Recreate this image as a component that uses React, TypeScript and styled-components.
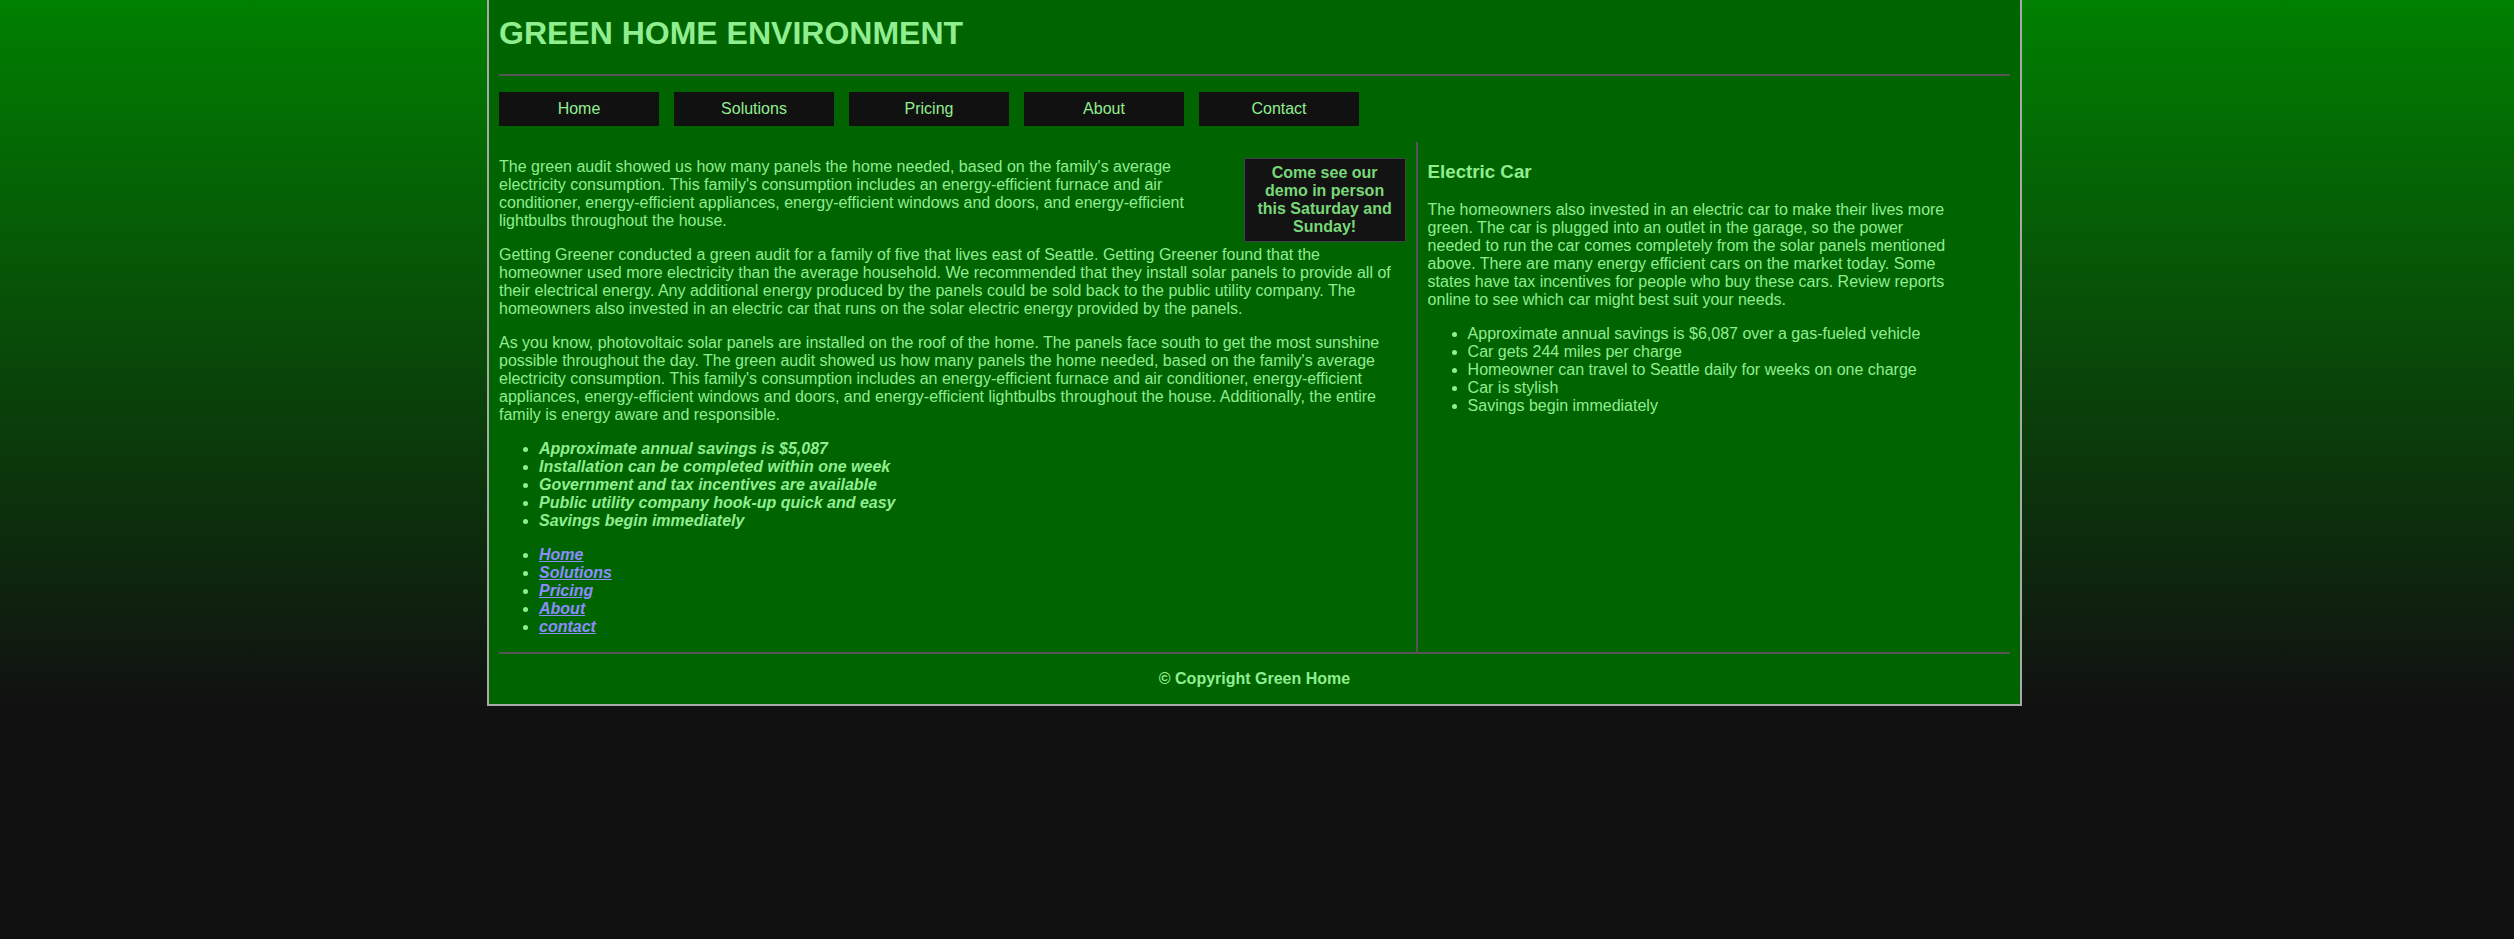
import React from "react";
import styled, { createGlobalStyle } from "styled-components";

const GlobalStyle = createGlobalStyle`
  html { background: #111; }
  body {
    margin: 0;
    font-family: "Liberation Sans", Arial, sans-serif;
    font-size: 16px;
    color: #90ee90;
    background: linear-gradient(to bottom, #008000, #111111) no-repeat;
  }
`;

const Page = styled.div`
  width: 1511px;
  margin-left: calc(50% - 770px);
  padding: 0 10px;
  background: #006400;
  border: 2px solid #a9a9a9;
  border-top: none;
  display: flow-root;
`;

const Title = styled.h1`
  margin: 15px 0 22px;
  font-size: 32px;
  font-weight: bold;
  color: #90ee90;
`;

const Rule = styled.hr`
  margin: 0;
  border: none;
  height: 2px;
  background: #555;
`;

const Nav = styled.nav`
  display: flex;
  gap: 15px;
  margin: 16px 0;
`;

const NavButton = styled.a`
  display: block;
  width: 160px;
  padding: 8px 0;
  text-align: center;
  background: #111;
  color: #90ee90;
  text-decoration: none;
`;

const Main = styled.div`
  display: flex;
  align-items: stretch;
`;

const LeftCol = styled.section`
  width: 60%;
  flex-shrink: 0;
  padding-right: 10px;
  border-right: 2px solid #555;
`;

const RightCol = styled.aside`
  width: 35%;
  flex-shrink: 0;
  padding-left: 10px;
`;

const Promo = styled.div`
  float: right;
  width: 150px;
  padding: 5px;
  margin: 16px 0 0 10px;
  background: #131313;
  border: 1px solid #444;
  text-align: center;
  font-weight: bold;
  color: #78d878;
`;

const Para = styled.p`
  margin: 16px 0;
`;

const SubTitle = styled.h3`
  margin: 18.72px 0;
  font-size: 18.72px;
  font-weight: bold;
`;

const List = styled.ul<{ $emph?: boolean }>`
  margin: 16px 0;
  padding-left: 40px;
  font-weight: ${(p) => (p.$emph ? "bold" : "normal")};
  font-style: ${(p) => (p.$emph ? "italic" : "normal")};
`;

const LinkItem = styled.a`
  color: #8c8cff;
  text-decoration: underline;
`;

const Copyright = styled.p`
  margin: 16px 0;
  text-align: center;
  font-weight: bold;
`;

const features = [
  "Approximate annual savings is $5,087",
  "Installation can be completed within one week",
  "Government and tax incentives are available",
  "Public utility company hook-up quick and easy",
  "Savings begin immediately",
];

const carFeatures = [
  "Approximate annual savings is $6,087 over a gas-fueled vehicle",
  "Car gets 244 miles per charge",
  "Homeowner can travel to Seattle daily for weeks on one charge",
  "Car is stylish",
  "Savings begin immediately",
];

const navItems = ["Home", "Solutions", "Pricing", "About", "Contact"];
const linkItems = ["Home", "Solutions", "Pricing", "About", "contact"];

export default function App() {
  return (
    <>
      <GlobalStyle />
      <Page>
        <header>
          <Title>GREEN HOME ENVIRONMENT</Title>
          <Rule />
          <Nav>
            {navItems.map((n) => (
              <NavButton key={n} href="#">
                {n}
              </NavButton>
            ))}
          </Nav>
        </header>
        <Main>
          <LeftCol>
            <Promo>Come see our demo in person this Saturday and Sunday!</Promo>
            <Para>
              The green audit showed us how many panels the home needed, based on the family's average
              electricity consumption. This family's consumption includes an energy-efficient furnace and air
              conditioner, energy-efficient appliances, energy-efficient windows and doors, and energy-efficient
              lightbulbs throughout the house.
            </Para>
            <Para>
              Getting Greener conducted a green audit for a family of five that lives east of Seattle. Getting
              Greener found that the homeowner used more electricity than the average household. We recommended
              that they install solar panels to provide all of their electrical energy. Any additional energy
              produced by the panels could be sold back to the public utility company. The homeowners also
              invested in an electric car that runs on the solar electric energy provided by the panels.
            </Para>
            <Para>
              As you know, photovoltaic solar panels are installed on the roof of the home. The panels face south
              to get the most sunshine possible throughout the day. The green audit showed us how many panels the
              home needed, based on the family's average electricity consumption. This family's consumption
              includes an energy-efficient furnace and air conditioner, energy-efficient appliances,
              energy-efficient windows and doors, and energy-efficient lightbulbs throughout the house.
              Additionally, the entire family is energy aware and responsible.
            </Para>
            <List $emph>
              {features.map((f) => (
                <li key={f}>{f}</li>
              ))}
            </List>
            <List $emph>
              {linkItems.map((l) => (
                <li key={l}>
                  <LinkItem href="#">{l}</LinkItem>
                </li>
              ))}
            </List>
          </LeftCol>
          <RightCol>
            <SubTitle>Electric Car</SubTitle>
            <Para>
              The homeowners also invested in an electric car to make their lives more green. The car is plugged
              into an outlet in the garage, so the power needed to run the car comes completely from the solar
              panels mentioned above. There are many energy efficient cars on the market today. Some states have
              tax incentives for people who buy these cars. Review reports online to see which car might best
              suit your needs.
            </Para>
            <List>
              {carFeatures.map((f) => (
                <li key={f}>{f}</li>
              ))}
            </List>
          </RightCol>
        </Main>
        <footer>
          <Rule />
          <Copyright>© Copyright Green Home</Copyright>
        </footer>
      </Page>
    </>
  );
}
